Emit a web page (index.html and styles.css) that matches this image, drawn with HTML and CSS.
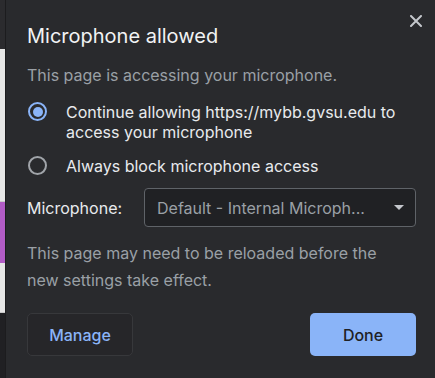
FILE: index.html
```html
<!DOCTYPE html>
<html lang="en">
<head>
  <meta charset="UTF-8" />
  <title>Microphone allowed</title>
  <link rel="stylesheet" href="styles.css">
</head>
<body>
  <div class="page-strip">
    <div class="strip-top"></div>
    <div class="strip-light"></div>
    <div class="strip-purple"></div>
    <div class="strip-light strip-lower"></div>
    <div class="strip-bottom"></div>
  </div>

  <div class="bubble">
    <button class="close" aria-label="Close">
      <svg width="12" height="12" viewBox="0 0 12 12">
        <path d="M1 1 L11 11 M11 1 L1 11" stroke="#c4c7cc" stroke-width="2" stroke-linecap="round" />
      </svg>
    </button>

    <h1 class="title">Microphone allowed</h1>
    <p class="note">This page is accessing your microphone.</p>

    <label class="option">
      <span class="radio checked"></span>
      <span class="option-text">Continue allowing https://mybb.gvsu.edu to access your microphone</span>
    </label>
    <label class="option option-block">
      <span class="radio"></span>
      <span class="option-text">Always block microphone access</span>
    </label>

    <div class="device-row">
      <span class="device-label">Microphone:</span>
      <div class="select">
        <span>Default - Internal Microph...</span>
        <svg width="10" height="6" viewBox="0 0 10 6"><path d="M0 0 H10 L5 5 Z" fill="#c4c7cc" /></svg>
      </div>
    </div>

    <p class="note reload">This page may need to be reloaded before the new settings take effect.</p>

    <div class="actions">
      <button class="button manage">Manage</button>
      <button class="button done">Done</button>
    </div>
  </div>
</body>
</html>
```

FILE: styles.css
```css
body {
  margin: 0;
  width: 435px;
  height: 378px;
  overflow: hidden;
  display: flex;
  background: #292a2d;
  font-family: "Inter", "Roboto", sans-serif;
}

.page-strip {
  width: 5px;
  flex-shrink: 0;
  display: flex;
  flex-direction: column;
  border-right: 1px solid #1c1c1e;
}

.strip-top { height: 49px; background: #2b2b2e; }
.strip-light { height: 153px; background: #e6e6e6; border-bottom: 1px solid #c9c9c9; box-sizing: border-box; }
.strip-purple { height: 61px; background: #b25cc6; }
.strip-lower { height: 50px; border-top: 0; }
.strip-bottom { flex: 1; background: #202023; }

.bubble {
  flex: 1;
  position: relative;
  padding: 24px 19px 0 21px;
  color: #e8eaed;
}

.close {
  position: absolute;
  top: 14px;
  right: 12px;
  width: 14px;
  height: 14px;
  padding: 0;
  border: none;
  background: none;
  display: flex;
  align-items: center;
  justify-content: center;
}

.title {
  margin: 0;
  font-size: 20px;
  font-weight: 400;
  line-height: 24px;
  color: #f1f3f4;
}

.note {
  margin: 17px 0 0;
  font-size: 16px;
  line-height: 20px;
  color: #9aa0a6;
}

.option {
  display: flex;
  align-items: flex-start;
  margin-top: 17px;
  font-size: 16px;
  line-height: 20px;
}

.option-block {
  margin-top: 14px;
}

.radio {
  width: 15px;
  height: 15px;
  margin: 0 19px 0 1px;
  flex-shrink: 0;
  border: 2px solid #a0a4a9;
  border-radius: 50%;
  position: relative;
}

.radio.checked {
  border-color: #8ab4f8;
}

.radio.checked::after {
  content: "";
  position: absolute;
  top: 2.5px;
  left: 2.5px;
  width: 10px;
  height: 10px;
  border-radius: 50%;
  background: #8ab4f8;
}

.option-text {
  width: 340px;
}

.device-row {
  display: flex;
  align-items: center;
  margin-top: 12px;
}

.device-label {
  width: 117px;
  font-size: 16px;
}

.select {
  flex: 1;
  height: 39px;
  box-sizing: border-box;
  display: flex;
  align-items: center;
  justify-content: space-between;
  padding: 0 11px 0 12px;
  border: 1px solid #5f6368;
  border-radius: 4px;
  background: #202124;
  color: #9aa0a6;
  font-size: 16px;
}

.reload {
  max-width: 365px;
  margin-top: 13px;
  line-height: 27px;
}

.actions {
  display: flex;
  justify-content: space-between;
  margin-top: 19px;
}

.button {
  height: 43px;
  width: 106px;
  border-radius: 5px;
  font-family: inherit;
  font-size: 16px;
  font-weight: 500;
}

.manage {
  background: #262629;
  border: 1px solid #37383b;
  color: #8ab4f8;
}

.done {
  background: #8ab4f8;
  border: none;
  color: #202124;
}
```
